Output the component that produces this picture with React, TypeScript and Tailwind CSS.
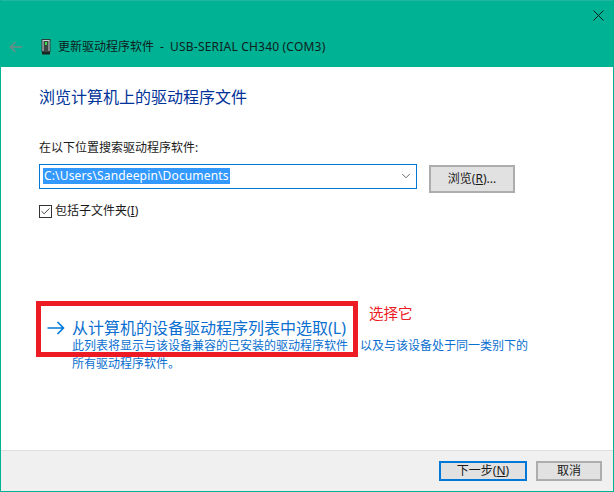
import React from 'react';
import { ChevronDown, Check } from 'lucide-react';

const font = { fontFamily: '"Noto Sans", "Noto Sans CJK SC", sans-serif' };

const App: React.FC = () => {
  return (
    <div
      className="relative flex h-[492px] w-[614px] flex-col overflow-hidden border-x border-b border-[#00b294] bg-white font-['Noto_Sans','Noto_Sans_CJK_SC',sans-serif] text-[12px] text-[#1a1a1a]"
      style={font}
    >
      {/* Title bar */}
      <div className="h-[67px] flex-shrink-0 border-t border-[#1fb79e] bg-[#00b294]">
        <div className="flex h-[30px] justify-end pr-[9px] pt-[9px]">
          <svg width="11" height="11" viewBox="0 0 11 11" className="text-[#10201c]">
            <path d="M0.5 0.5L10.5 10.5M10.5 0.5L0.5 10.5" stroke="currentColor" strokeWidth="1" />
          </svg>
        </div>
        <div className="flex h-[32px] items-center pl-[8px]">
          <svg width="14" height="12" viewBox="0 0 14 12" className="text-[#6e8d86]">
            <path d="M13 6H1.5M6.5 1L1.5 6L6.5 11" fill="none" stroke="currentColor" strokeWidth="1.4" />
          </svg>
          <svg width="10" height="16" viewBox="0 0 10 16" className="ml-[18px]">
            <rect x="1" y="0.5" width="8" height="12" fill="#c9d4d2" stroke="#2d3a38" />
            <rect x="2.5" y="2" width="5" height="11" fill="#3a4442" />
            <rect x="4" y="3" width="2" height="3" fill="#35e04a" />
            <rect x="1" y="13" width="8" height="2.5" fill="#1c2423" />
          </svg>
          <span className="ml-[7px] text-[12px] leading-none text-[#10201c]">
            更新驱动程序软件
            <span className="ml-[6px] tracking-[0.2px]">-</span>
            <span className="ml-[6px] tracking-[0.2px]">USB-SERIAL CH340 (COM3)</span>
          </span>
        </div>
      </div>

      {/* Body */}
      <div className="flex-1 pl-[38px]">
        <h1 className="mt-[18px] text-[16px] font-normal leading-[24px] text-[#003399]">浏览计算机上的驱动程序文件</h1>
        <p className="mt-[31px] leading-[16px]">在以下位置搜索驱动程序软件:</p>

        <div className="mt-[8px] flex items-start">
          <div className="flex h-[25px] w-[378px] items-center border border-[#0078d7] pb-[1px] pl-[3px] pr-[3px]">
            <span className="bg-[#3399ff] px-[1px] leading-[16px] tracking-[0.15px] text-white">C:\Users\Sandeepin\Documents</span>
            <ChevronDown className="ml-auto h-[14px] w-[14px] text-[#555555]" strokeWidth={1.5} />
          </div>
          <button className="ml-[12px] mt-[1px] h-[28px] w-[86px] border-2 border-[#adadad] bg-[#e1e1e1] text-[12px] leading-none">
            浏览(<span className="underline">R</span>)...
          </button>
        </div>

        <label className="mt-[10px] flex items-center">
          <span className="flex h-[13px] w-[13px] items-center justify-center border border-[#333333]">
            <Check className="h-[11px] w-[11px] text-[#333333]" strokeWidth={2} />
          </span>
          <span className="ml-[3px] leading-[16px]">包括子文件夹(<span className="underline">I</span>)</span>
        </label>

        <div className="mt-[98px] flex items-center pl-[8px] text-[#0a6fd0]">
          <svg width="18" height="14" viewBox="0 0 18 14" className="text-[#0078d7]">
            <path d="M0.5 7H16.5M10.5 1L16.5 7L10.5 13" fill="none" stroke="currentColor" strokeWidth="1.6" />
          </svg>
          <span className="ml-[7px] text-[16px] leading-[22px]">从计算机的设备驱动程序列表中选取(L)</span>
        </div>
        <p className="ml-[33px] -mt-[2px] w-[460px] leading-[18px] text-[#0a6fd0]">
          此列表将显示与该设备兼容的已安装的驱动程序软件　以及与该设备处于同一类别下的所有驱动程序软件。
        </p>
      </div>

      {/* Footer */}
      <div className="flex h-[41px] flex-shrink-0 items-start justify-end gap-[9px] border-t border-[#dfdfdf] bg-[#f0f0f0] pr-[11px] pt-[10px]">
        <button className="h-[20px] w-[88px] border-2 border-[#0078d7] bg-[#e1e1e1] text-[12px] leading-none">
          下一步(<span className="underline">N</span>)
        </button>
        <button className="h-[20px] w-[66px] border-2 border-[#adadad] bg-[#e1e1e1] text-[12px] leading-none">取消</button>
      </div>

      {/* Annotation drawn over the dialog */}
      <div className="absolute left-[35px] top-[301px] h-[56px] w-[322px] border-[5px] border-[#ed1c24]" />
      <span className="absolute left-[368px] top-[302px] text-[14.5px] leading-[22px] text-[#ed1c24]">选择它</span>
    </div>
  );
};

export default App;
